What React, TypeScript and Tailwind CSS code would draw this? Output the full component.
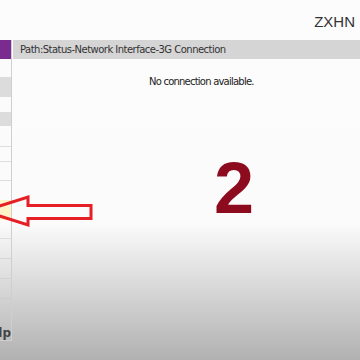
import React from "react";

const rows: { h: number; cls: string }[] = [
  { h: 18, cls: "bg-[#fbfbfb]" },
  { h: 20, cls: "bg-[#dcdcdc]" },
  { h: 15, cls: "bg-[#fbfbfb]" },
  { h: 14, cls: "bg-[#dcdcdc]" },
  { h: 21, cls: "border-b border-[#dedede]" },
  { h: 15, cls: "border-b border-[#dedede]" },
  { h: 19, cls: "border-b border-[#dedede]" },
  { h: 19, cls: "" },
  { h: 20, cls: "bg-[#fff4c8]" },
  { h: 19, cls: "border-b border-[#dedede]" },
  { h: 20, cls: "border-b border-[#d6d6d6]" },
  { h: 20, cls: "border-b border-[#d2d2d2]" },
  { h: 20, cls: "border-b border-[#cccccc]" },
];

export default function App() {
  return (
    <div
      className="relative w-[360px] h-[360px] overflow-hidden bg-[linear-gradient(to_bottom,#fcfcfc_0%,#fbfbfb_62%,#f1f1f1_67%,#b1b1b1_100%)]"
      style={{ fontFamily: "'DejaVu Sans', Verdana, sans-serif" }}
    >
      <div className="h-[40px] flex items-start justify-end pr-[5px] pt-[13px]">
        <span
          className="text-[15px] leading-[18px] text-[#333]"
          style={{ fontFamily: "'Liberation Sans', Arial, sans-serif" }}
        >
          ZXHN
        </span>
      </div>
      <div className="flex">
        <div className="w-[12px] h-[301px] border-r border-b border-[#cfcfcf] overflow-hidden flex flex-col">
          <div className="h-[19px] bg-[#7a2b8f] shrink-0" />
          {rows.map((r, i) => (
            <div key={i} className={`shrink-0 box-border ${r.cls}`} style={{ height: r.h }} />
          ))}
          <div className="flex-1 flex justify-end items-end pb-[0px]">
            <span className="text-[12px] font-bold text-[#444] whitespace-nowrap leading-[14px]" style={{ fontFamily: "Tahoma, 'DejaVu Sans', sans-serif" }}>
              Help
            </span>
          </div>
        </div>
        <div className="flex-1 ml-[1px]">
          <div className="h-[19px] bg-[#d5d5d5] flex items-center pl-[7px]">
            <span className="text-[10px] text-[#333] whitespace-nowrap tracking-[-0.52px]">
              Path:Status-Network Interface-3G Connection
            </span>
          </div>
          <div className="pt-[9px] pl-[136px]">
            <span className="text-[10px] text-[#222] whitespace-nowrap tracking-[-0.78px]">
              No connection available.
            </span>
          </div>
        </div>
      </div>
      <div
        className="absolute left-[214px] top-[149px] text-[72px] font-bold leading-[78px] text-[#8c0b1e]"
        style={{ fontFamily: "'Liberation Sans', Arial, sans-serif" }}
      >
        2
      </div>
      <svg className="absolute left-0 top-0" width="360" height="360">
        <polygon
          points="-16,211 28,197 28,205.5 91,205.5 91,218.5 28,218.5 28,225"
          fill="none"
          stroke="#e61f27"
          strokeWidth="3"
          strokeLinejoin="miter"
        />
      </svg>
    </div>
  );
}
